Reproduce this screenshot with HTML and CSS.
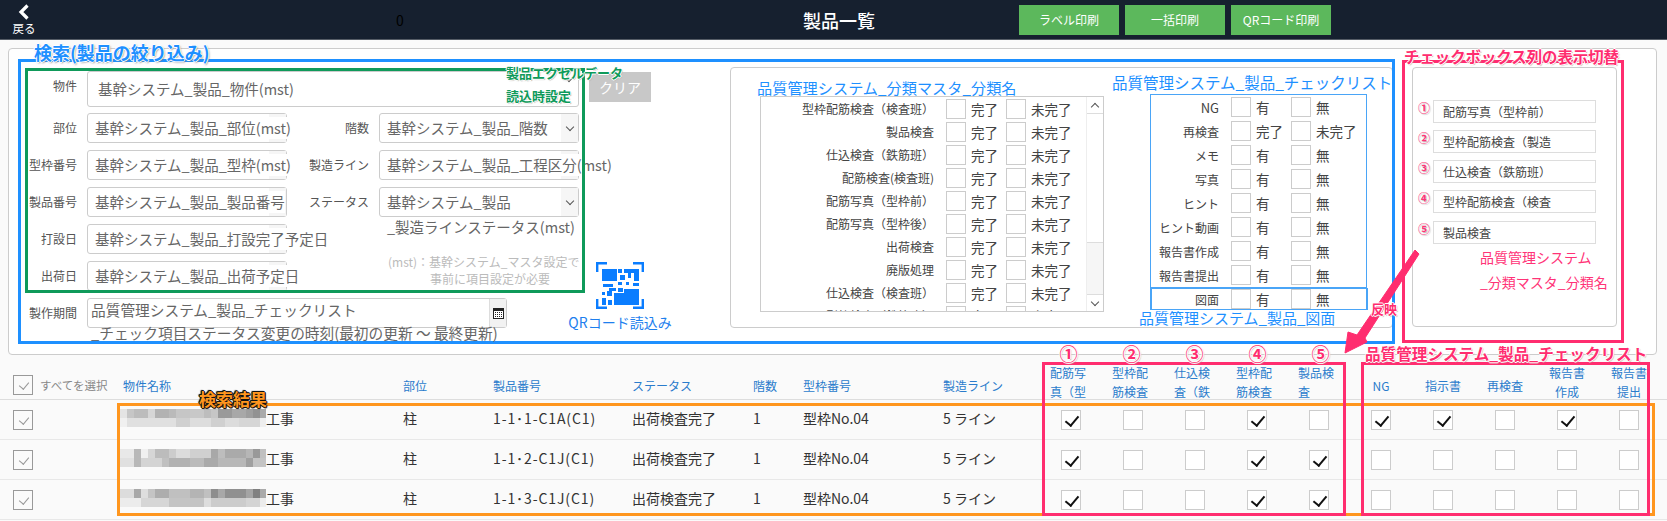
FILE: index.html
```html
<!DOCTYPE html>
<html lang="ja">
<head>
    <meta charset="UTF-8">
    <title>製品一覧</title>
    <link rel="stylesheet" href="styles.css">
</head>
<body>
<div class="page">
    <header class="topbar">
        <a class="back">
            <svg class="back-icon" width="12" height="16" viewBox="0 0 12 16"><polyline points="9.5,1.5 3,8 9.5,14.5" fill="none" stroke="#fff" stroke-width="3.2"/></svg>
            <span>戻る</span>
        </a>
        <div class="count">0</div>
        <div class="page-title">製品一覧</div>
        <div class="top-buttons">
            <button class="top-btn">ラベル印刷</button>
            <button class="top-btn">一括印刷</button>
            <button class="top-btn">QRコード印刷</button>
        </div>
    </header>

    <section class="search-panel">
        <!-- 検索フォーム -->
        <div class="search-form">
            <div class="label">物件</div>
            <div class="field field-wide">
                <span class="field-text field-text-wide">基幹システム_製品_物件(mst)</span>
                <i class="chev chev-field"></i>
            </div>
            <button class="clear-btn">クリア</button>

            <div class="label">部位</div>
            <div class="field"><i class="addon"></i><span class="field-text">基幹システム_製品_部位(mst)</span></div>
            <div class="label">階数</div>
            <div class="field"><i class="addon addon-select"><i class="chev"></i></i><span class="field-text">基幹システム_製品_階数</span></div>
            <div></div>

            <div class="label">型枠番号</div>
            <div class="field"><i class="addon"></i><span class="field-text">基幹システム_製品_型枠(mst)</span></div>
            <div class="label">製造ライン</div>
            <div class="field"><i class="addon"></i><span class="field-text">基幹システム_製品_工程区分(mst)</span></div>
            <div></div>

            <div class="label">製品番号</div>
            <div class="field"><i class="addon"></i><span class="field-text">基幹システム_製品_製品番号</span></div>
            <div class="label">ステータス</div>
            <div class="field field-status"><i class="addon addon-select"><i class="chev"></i></i><span class="field-text">基幹システム_製品<br>_製造ラインステータス(mst)</span></div>
            <div></div>

            <div class="label">打設日</div>
            <div class="field"><i class="addon"></i><span class="field-text">基幹システム_製品_打設完了予定日</span></div>
            <div></div>
            <div></div>
            <div></div>

            <div class="label">出荷日</div>
            <div class="field"><i class="addon"></i><span class="field-text">基幹システム_製品_出荷予定日</span></div>
            <div></div>
            <div class="note">
                <span class="note-line">(mst)：基幹システム_マスタ設定で</span>
                <span class="note-line note-line-2">事前に項目設定が必要</span>
            </div>
            <div class="qr-reader">
                <svg class="qr-icon" width="48" height="47" viewBox="0 0 48 47" fill="#0a7dff">
                    <path d="M1.2 10V1.2H11M37 1.2h9.8V10M1.2 37v8.8H11M37 45.800h9.800V37" fill="none" stroke="#0a7dff" stroke-width="2.400"/>
                    <rect x="6" y="7" width="15" height="12"/>
                    <rect x="22" y="7" width="4" height="4"/>
                    <rect x="28" y="7" width="15" height="4"/>
                    <rect x="24" y="13" width="5" height="5"/>
                    <rect x="32" y="11" width="3" height="5"/>
                    <rect x="38" y="11" width="5" height="8"/>
                    <rect x="22" y="20" width="4" height="3"/>
                    <rect x="30" y="20" width="3" height="3"/>
                    <rect x="37" y="21" width="6" height="3"/>
                    <rect x="7" y="22" width="10" height="3"/>
                    <rect x="13" y="26" width="7" height="3"/>
                    <rect x="6" y="30" width="3" height="3"/>
                    <rect x="11" y="29" width="5" height="5"/>
                    <rect x="22" y="26" width="5" height="4"/>
                    <rect x="28" y="27" width="15" height="16"/>
                    <rect x="18" y="31" width="10" height="12"/>
                    <rect x="6" y="36" width="4" height="7"/>
                    <rect x="12" y="38" width="4" height="5"/>
                </svg>
                <div class="qr-text">QRコード読込み</div>
            </div>

            <div class="label">製作期間</div>
            <div class="field field-period">
                <span class="period-text">品質管理システム_製品_チェックリスト<br>_チェック項目ステータス変更の時刻(最初の更新 〜 最終更新)</span>
                <i class="addon addon-calendar">
                    <svg width="11" height="11" viewBox="0 0 11 11"><rect width="11" height="11" fill="#222"/><path d="M1 3h9v7H1z" fill="#fff"/><path d="M2 4h1v1H2zM4 4h1v1H4zM6 4h1v1H6zM8 4h1v1H8zM2 6h1v1H2zM4 6h1v1H4zM6 6h1v1H6zM8 6h1v1H8zM2 8h1v1H2zM4 8h1v1H4zM6 8h1v1H6zM8 8h1v1H8z" fill="#222"/></svg>
                </i>
            </div>
        </div>

        <!-- 分類・チェックリスト -->
        <div class="category-box">
            <div class="category-left">
                <div class="blue-title category-title">品質管理システム_分類マスタ_分類名</div>
                <div class="category-list">
                    <div class="category-rows">
                        <div class="check-row"><span class="row-label">型枠配筋検査（検査班）</span><i class="box"></i><span class="opt">完了</span><i class="box"></i><span class="opt">未完了</span></div>
                        <div class="check-row"><span class="row-label">製品検査</span><i class="box"></i><span class="opt">完了</span><i class="box"></i><span class="opt">未完了</span></div>
                        <div class="check-row"><span class="row-label">仕込検査（鉄筋班）</span><i class="box"></i><span class="opt">完了</span><i class="box"></i><span class="opt">未完了</span></div>
                        <div class="check-row"><span class="row-label">配筋検査(検査班)</span><i class="box"></i><span class="opt">完了</span><i class="box"></i><span class="opt">未完了</span></div>
                        <div class="check-row"><span class="row-label">配筋写真（型枠前）</span><i class="box"></i><span class="opt">完了</span><i class="box"></i><span class="opt">未完了</span></div>
                        <div class="check-row"><span class="row-label">配筋写真（型枠後）</span><i class="box"></i><span class="opt">完了</span><i class="box"></i><span class="opt">未完了</span></div>
                        <div class="check-row"><span class="row-label">出荷検査</span><i class="box"></i><span class="opt">完了</span><i class="box"></i><span class="opt">未完了</span></div>
                        <div class="check-row"><span class="row-label">廃版処理</span><i class="box"></i><span class="opt">完了</span><i class="box"></i><span class="opt">未完了</span></div>
                        <div class="check-row"><span class="row-label">仕込検査（検査班）</span><i class="box"></i><span class="opt">完了</span><i class="box"></i><span class="opt">未完了</span></div>
                        <div class="check-row"><span class="row-label">型枠検査（鉄筋班）</span><i class="box"></i><span class="opt">完了</span><i class="box"></i><span class="opt">未完了</span></div>
                    </div>
                    <div class="scrollbar">
                        <div class="scroll-btn"><i class="chev chev-up"></i></div>
                        <div class="scroll-track"></div>
                        <div class="scroll-thumb"></div>
                        <div class="scroll-btn scroll-btn-down"><i class="chev"></i></div>
                    </div>
                </div>
            </div>
            <div class="category-right">
                <div class="blue-title checklist-title">品質管理システム_製品_チェックリスト</div>
                <div class="checklist">
                    <div class="check-row check-row-short"><span class="row-label row-label-latin">NG</span><i class="box"></i><span class="opt">有</span><i class="box"></i><span class="opt">無</span></div>
                    <div class="check-row check-row-short"><span class="row-label">再検査</span><i class="box"></i><span class="opt">完了</span><i class="box"></i><span class="opt">未完了</span></div>
                    <div class="check-row check-row-short"><span class="row-label">メモ</span><i class="box"></i><span class="opt">有</span><i class="box"></i><span class="opt">無</span></div>
                    <div class="check-row check-row-short"><span class="row-label">写真</span><i class="box"></i><span class="opt">有</span><i class="box"></i><span class="opt">無</span></div>
                    <div class="check-row check-row-short"><span class="row-label">ヒント</span><i class="box"></i><span class="opt">有</span><i class="box"></i><span class="opt">無</span></div>
                    <div class="check-row check-row-short"><span class="row-label">ヒント動画</span><i class="box"></i><span class="opt">有</span><i class="box"></i><span class="opt">無</span></div>
                    <div class="check-row check-row-short"><span class="row-label">報告書作成</span><i class="box"></i><span class="opt">有</span><i class="box"></i><span class="opt">無</span></div>
                    <div class="check-row check-row-short"><span class="row-label">報告書提出</span><i class="box"></i><span class="opt">有</span><i class="box"></i><span class="opt">無</span></div>
                </div>
                <div class="drawing-box">
                    <div class="check-row check-row-drawing"><span class="row-label">図面</span><i class="box"></i><span class="opt">有</span><i class="box"></i><span class="opt">無</span></div>
                </div>
                <div class="blue-title drawing-title">品質管理システム_製品_図面</div>
            </div>
        </div>

        <!-- 列の表示切替 -->
        <div class="toggle-box">
            <div class="toggle-row"><span class="toggle-num">①</span><div class="toggle-input">配筋写真（型枠前）</div></div>
            <div class="toggle-row"><span class="toggle-num">②</span><div class="toggle-input">型枠配筋検査（製造</div></div>
            <div class="toggle-row"><span class="toggle-num">③</span><div class="toggle-input">仕込検査（鉄筋班）</div></div>
            <div class="toggle-row"><span class="toggle-num">④</span><div class="toggle-input">型枠配筋検査（検査</div></div>
            <div class="toggle-row toggle-row-last"><span class="toggle-num">⑤</span><div class="toggle-input">製品検査</div></div>
            <div class="toggle-note">品質管理システム<br><span class="toggle-note-2">_分類マスタ_分類名</span></div>
        </div>
    </section>

    <section class="result">
        <div class="result-row result-head">
            <div class="select-all"><i class="box box-grey box-on"></i><span>すべてを選択</span></div>
            <div>物件名称</div>
            <div>部位</div>
            <div>製品番号</div>
            <div>ステータス</div>
            <div>階数</div>
            <div>型枠番号</div>
            <div>製造ライン</div>
            <div class="head-wrap">配筋写真（型</div>
            <div class="head-wrap">型枠配筋検査</div>
            <div class="head-wrap">仕込検査（鉄</div>
            <div class="head-wrap">型枠配筋検査</div>
            <div class="head-wrap">製品検査</div>
            <div class="head-center">NG</div>
            <div class="head-center">指示書</div>
            <div class="head-center">再検査</div>
            <div class="head-center head-two">報告書<br>作成</div>
            <div class="head-center head-two">報告書<br>提出</div>
        </div>

        <div class="result-row result-data">
            <div class="select-cell"><i class="box box-grey box-on"></i></div>
            <div class="name-cell"><i class="mosaic mosaic-1"></i>工事</div>
            <div>柱</div>
            <div class="no-cell">1-1･1-C1A(C1)</div>
            <div>出荷検査完了</div>
            <div>1</div>
            <div>型枠No.04</div>
            <div>5 ライン</div>
            <div class="check-cell"><i class="box box-on"></i></div>
            <div class="check-cell"><i class="box"></i></div>
            <div class="check-cell"><i class="box"></i></div>
            <div class="check-cell"><i class="box box-on"></i></div>
            <div class="check-cell"><i class="box"></i></div>
            <div class="check-cell"><i class="box box-on"></i></div>
            <div class="check-cell"><i class="box box-on"></i></div>
            <div class="check-cell"><i class="box"></i></div>
            <div class="check-cell"><i class="box box-on"></i></div>
            <div class="check-cell"><i class="box"></i></div>
        </div>
        <div class="result-row result-data">
            <div class="select-cell"><i class="box box-grey box-on"></i></div>
            <div class="name-cell"><i class="mosaic mosaic-2"></i>工事</div>
            <div>柱</div>
            <div class="no-cell">1-1･2-C1J(C1)</div>
            <div>出荷検査完了</div>
            <div>1</div>
            <div>型枠No.04</div>
            <div>5 ライン</div>
            <div class="check-cell"><i class="box box-on"></i></div>
            <div class="check-cell"><i class="box"></i></div>
            <div class="check-cell"><i class="box"></i></div>
            <div class="check-cell"><i class="box box-on"></i></div>
            <div class="check-cell"><i class="box box-on"></i></div>
            <div class="check-cell"><i class="box"></i></div>
            <div class="check-cell"><i class="box"></i></div>
            <div class="check-cell"><i class="box"></i></div>
            <div class="check-cell"><i class="box"></i></div>
            <div class="check-cell"><i class="box"></i></div>
        </div>
        <div class="result-row result-data">
            <div class="select-cell"><i class="box box-grey box-on"></i></div>
            <div class="name-cell"><i class="mosaic mosaic-3"></i>工事</div>
            <div>柱</div>
            <div class="no-cell">1-1･3-C1J(C1)</div>
            <div>出荷検査完了</div>
            <div>1</div>
            <div>型枠No.04</div>
            <div>5 ライン</div>
            <div class="check-cell"><i class="box box-on"></i></div>
            <div class="check-cell"><i class="box"></i></div>
            <div class="check-cell"><i class="box"></i></div>
            <div class="check-cell"><i class="box box-on"></i></div>
            <div class="check-cell"><i class="box box-on"></i></div>
            <div class="check-cell"><i class="box"></i></div>
            <div class="check-cell"><i class="box"></i></div>
            <div class="check-cell"><i class="box"></i></div>
            <div class="check-cell"><i class="box"></i></div>
            <div class="check-cell"><i class="box"></i></div>
        </div>
    </section>

    <!-- 説明用の注釈（画面の上に重ねる） -->
    <div class="mark mark-search"></div>
    <div class="mark mark-excel"></div>
    <div class="mark mark-toggle"></div>
    <div class="mark mark-result"></div>
    <div class="mark mark-cols"></div>
    <div class="mark mark-checks"></div>
    <svg class="arrow" width="90" height="120" viewBox="0 0 90 120"><polygon points="80,5 84,9 30,93 32,97 10,108 13,87 22,90" fill="#ff2d6f" stroke="#ff2d6f" stroke-linejoin="round"/></svg>

    <div class="tag tag-blue tag-search">検索(製品の絞り込み)</div>
    <div class="tag tag-green tag-excel-1">製品エクセルデータ</div>
    <div class="tag tag-green tag-excel-2">読込時設定</div>
    <div class="tag tag-pink tag-toggle">チェックボックス列の表示切替</div>
    <div class="tag tag-pink tag-reflect">反映</div>
    <div class="tag tag-pink tag-checks">品質管理システム_製品_チェックリスト</div>
    <div class="tag tag-result">検索結果</div>
    <div class="num-tags">
        <span class="tag-pink">①</span>
        <span class="tag-pink">②</span>
        <span class="tag-pink">③</span>
        <span class="tag-pink">④</span>
        <span class="tag-pink">⑤</span>
    </div>
</div>
</body>
</html>
```

FILE: styles.css
```css
*{
    margin: 0;
    padding: 0;
    box-sizing: border-box;
}

html, body{
    height: 521px;
    overflow: hidden;
}

body{
    background-color: #fafafa;
    color: #333;
    font-family: "Noto Sans CJK JP", "Noto Sans", sans-serif;
    font-size: 14px;
}

i{
    font-style: normal;
}

.page{
    position: relative;
    width: 1667px;
    height: 521px;
}

/* ヘッダー */
.topbar{
    display: flex;
    align-items: center;
    height: 40px;
    background-color: #16202f;
    border-bottom: 1px solid #555c66;
}

.back{
    display: flex;
    flex-direction: column;
    align-items: center;
    width: 48px;
    margin-right: 348px;
    color: #fff;
    font-size: 11.500px;
    line-height: 14px;
}

.back-icon{
    margin-bottom: 1px;
}

.count{
    width: 407px;
    color: #000;
    font-size: 14px;
}

.page-title{
    width: 216px;
    color: #fff;
    font-size: 18px;
    font-weight: 500;
}

.top-buttons{
    display: flex;
    gap: 6px;
}

.top-btn{
    width: 100px;
    height: 30px;
    background-color: #5cb85c;
    border: none;
    color: #fff;
    font-family: inherit;
    font-size: 12px;
}

/* 検索パネル */
.search-panel{
    display: flex;
    align-items: flex-start;
    height: 307px;
    margin: 8px 10px 0 8px;
    padding: 18px 0 0 16px;
    background-color: #fff;
    border: 1px solid #ccc;
    border-radius: 4px;
}

.search-form{
    display: grid;
    grid-template-columns: 52px 200px 72px 200px 62px;
    grid-template-rows: 35px repeat(6, 30px);
    gap: 7px 10px;
    width: 705px;
    padding-top: 4px;
}

.label{
    padding-top: 6px;
    color: #555;
    font-size: 12px;
    line-height: 17px;
    text-align: right;
    white-space: nowrap;
}

.field{
    position: relative;
    height: 30px;
    padding-left: 7px;
    background-color: #fff;
    border: 1px solid #ccc;
    border-radius: 3px;
    color: #666;
    font-size: 14.500px;
    white-space: nowrap;
}

.field-wide{
    grid-column: 2 / 5;
    height: 36px;
    padding-left: 10px;
}

.field-text{
    position: relative;
    display: inline-block;
    margin-top: 3px;
    background-color: #fff;
    line-height: 22px;
}

.field-text-wide{
    margin-top: 6px;
}

.field-status .field-text{
    margin-top: 1px;
    background: none;
    line-height: 25px;
}

.addon{
    position: absolute;
    top: 0;
    right: 0;
    bottom: 0;
    width: 17px;
    background-color: #f6f6f6;
}

.addon-select{
    display: flex;
    align-items: center;
    justify-content: center;
}

.chev{
    display: block;
    width: 6px;
    height: 6px;
    margin-top: -3px;
    border-right: 1.300px solid #555;
    border-bottom: 1.300px solid #555;
    transform: rotate(45deg);
}

.chev-up{
    margin-top: 3px;
    transform: rotate(225deg);
}

.chev-field{
    position: absolute;
    top: 6px;
    right: 6px;
}

.field-period{
    grid-column: 2 / 5;
    width: 420px;
    padding-left: 3px;
}

.period-text{
    position: relative;
    z-index: 1;
    display: block;
    margin-top: -1px;
    font-size: 14.700px;
    line-height: 23px;
}

.addon-calendar{
    display: flex;
    align-items: center;
    justify-content: center;
    width: 17px;
    background-color: #f2f2f2;
    border-left: 1px solid #ddd;
}

.clear-btn{
    width: 62px;
    height: 30px;
    margin-top: 1px;
    background-color: #c8c8c8;
    border: none;
    color: #fff;
    font-family: inherit;
    font-size: 14px;
}

.note{
    margin-top: -8px;
    margin-left: 9px;
    color: #bbb;
    font-size: 12px;
    line-height: 17px;
    white-space: nowrap;
}

.note-line{
    display: block;
}

.note-line-2{
    margin-left: 42px;
}

.qr-reader{
    grid-row: span 2;
    display: flex;
    flex-direction: column;
    align-items: center;
    padding-top: 1px;
}

.qr-icon{
    flex: none;
}

.qr-text{
    margin-top: 4px;
    color: #1e7fee;
    font-size: 14px;
    line-height: 18px;
    white-space: nowrap;
}

/* 分類・チェックリスト */
.category-box{
    display: flex;
    width: 663px;
    height: 261px;
    padding-left: 26px;
    background-color: #fff;
    border: 1px solid #ccc;
    border-radius: 4px;
}

.blue-title{
    color: #1e90ff;
    font-size: 15.500px;
    line-height: 18px;
    white-space: nowrap;
}

.category-title{
    height: 28px;
    padding-top: 10px;
    font-size: 15.200px;
}

.category-list{
    display: flex;
    width: 344px;
    height: 216px;
    margin-left: 3px;
    overflow: hidden;
    border: 1px solid #ccc;
}

.category-rows{
    width: 325px;
}

.check-row{
    display: grid;
    grid-template-columns: 185px 20px 40px 20px 1fr;
    align-items: center;
    height: 23px;
    white-space: nowrap;
}

.check-row-short{
    grid-template-columns: 80px 20px 40px 20px 1fr;
    height: 24px;
}

.check-row-drawing{
    grid-template-columns: 79px 20px 40px 20px 1fr;
    height: 18px;
}

.row-label{
    padding-right: 12px;
    color: #444;
    font-size: 12px;
    text-align: right;
}

.row-label-latin{
    font-size: 13px;
}

.opt{
    padding-left: 5px;
    color: #444;
    font-size: 13.500px;
}

.box{
    position: relative;
    display: block;
    width: 20px;
    height: 20px;
    background-color: #fff;
    border: 1px solid #ccc;
}

.box-on::after{
    content: "";
    position: absolute;
    left: 6px;
    top: 2px;
    width: 6px;
    height: 11px;
    border-right: 2px solid #111;
    border-bottom: 2px solid #111;
    transform: rotate(40deg);
}

.box-grey{
    background: none;
    border-color: #999;
}

.box-grey::after{
    left: 7px;
    top: 4px;
    width: 5px;
    height: 8px;
    border-right: 1px solid #999;
    border-bottom: 1px solid #999;
}

.scrollbar{
    display: flex;
    flex-direction: column;
    width: 17px;
    border-left: 1px solid #eee;
}

.scroll-btn{
    display: flex;
    align-items: center;
    justify-content: center;
    height: 17px;
    border-bottom: 1px solid #ddd;
}

.scroll-btn-down{
    border-top: 1px solid #ddd;
    border-bottom: none;
}

.scroll-track{
    height: 128px;
}

.scroll-thumb{
    height: 52px;
    background-color: #f6f6f6;
    border-top: 1px solid #ddd;
}

.category-right{
    margin-left: 8px;
}

.checklist-title{
    margin-top: 5px;
    margin-bottom: 3px;
}

.checklist{
    width: 217px;
    height: 194px;
    margin-left: 38px;
    background-color: #fff;
    border: 1px solid #4aa5f7;
}

.drawing-box{
    width: 218px;
    height: 22px;
    margin-left: 38px;
    overflow: hidden;
    border: 2px solid #4aa5f7;
    border-top-width: 1px;
    border-bottom-width: 1px;
}

.drawing-title{
    margin-left: 27px;
    font-size: 15px;
    line-height: 16px;
}

/* 列の表示切替 */
.toggle-box{
    display: flex;
    flex-direction: column;
    gap: 7px;
    width: 205px;
    height: 260px;
    margin-left: 19px;
    padding: 32px 0 0 5px;
    background-color: #fff;
    border: 1px solid #ccc;
    border-radius: 4px;
}

.toggle-row{
    display: flex;
}

.toggle-row-last{
    margin-top: 1px;
}

.toggle-num{
    width: 15px;
    color: #ff3377;
    font-size: 12px;
    font-weight: 700;
    line-height: 16px;
    text-shadow: 1px 1px 1px #bbb;
}

.toggle-input{
    width: 163px;
    height: 23px;
    padding-left: 9px;
    background-color: #fff;
    border: 1px solid #ddd;
    color: #444;
    font-size: 12px;
    line-height: 21px;
    white-space: nowrap;
}

.toggle-note{
    margin: -6px 0 0 62px;
    color: #ff3377;
    font-size: 14px;
    line-height: 25px;
    white-space: nowrap;
}

/* 検索結果 */
.result-row{
    display: grid;
    grid-template-columns: 110px 280px 90px 139px 121px 50px 140px 97px repeat(10, 62px);
    grid-template-rows: 39px;
    align-items: center;
    height: 40px;
    padding-left: 13px;
    border-bottom: 1px solid #e8e8e8;
    font-size: 14px;
    white-space: nowrap;
}

.result-data > div{
    margin-bottom: 3px;
}

.result-data > .check-cell,
.result-data > .select-cell{
    margin-bottom: 0;
}

.result-head{
    grid-template-rows: 28px;
    height: 45px;
    padding-top: 16px;
    border-bottom-color: #ddd;
    color: #2a7ccc;
    font-size: 12px;
}

.select-all{
    display: flex;
    align-items: center;
    gap: 7px;
    color: #888;
    font-size: 11.500px;
}

.head-wrap{
    width: 52px;
    height: 38px;
    margin-bottom: 7px;
    padding-left: 10px;
    overflow: hidden;
    line-height: 19px;
    white-space: normal;
}

.head-center{
    text-align: center;
}

.head-two{
    margin-bottom: 7px;
    line-height: 19px;
}

.no-cell{
    letter-spacing: 0.900px;
}

.name-cell{
    display: flex;
    align-items: center;
    margin-left: -3px;
}

.mosaic{
    display: block;
    width: 146px;
    height: 18px;
    background-repeat: no-repeat;
    background-size: 100% 9px;
    background-position: 0 0, 0 9px;
}

.mosaic-1{
    background-image:
        linear-gradient(90deg, #e4e4e4 0 7px, #c6c6c6 0 14px, #bcbcbc 0 28px, #d6d6d6 0 35px, #b2b2b2 0 49px, #bababa 0 56px, #c6c6c6 0 70px, #c8c8c8 0 84px, #bdbdbd 0 91px, #c6c6c6 0 98px, #9a9a9a 0 112px, #a8a8a8 0 126px, #9e9e9e 0 133px, #929292 0 140px, #aaa 0 146px),
        linear-gradient(90deg, #f0f0f0 0 7px, #e0e0e0 0 56px, #d0d0d0 0 70px, #ddd 0 91px, #d0d0d0 0 105px, #dcdcdc 0 119px, #d6d6d6 0 140px, #eee 0 146px);
}

.mosaic-2{
    background-image:
        linear-gradient(90deg, #e8e8e8 0 14px, #b8b8b8 0 21px, #f0f0f0 0 28px, #d6d6d6 0 35px, #bcbcbc 0 49px, #ccc 0 56px, #dcdcdc 0 70px, #d0d0d0 0 91px, #a8a8a8 0 98px, #bdbdbd 0 105px, #aaa 0 126px, #b6b6b6 0 133px, #999 0 140px, #c0c0c0 0 146px),
        linear-gradient(90deg, #e0e0e0 0 14px, #b8b8b8 0 21px, #d4d4d4 0 42px, #c0c0c0 0 49px, #b2b2b2 0 70px, #bbb 0 84px, #aaa 0 98px, #b8b8b8 0 126px, #a0a0a0 0 133px, #c4c4c4 0 146px);
}

.mosaic-3{
    background-image:
        linear-gradient(90deg, #dcdcdc 0 14px, #a8a8a8 0 21px, #dedede 0 28px, #c4c4c4 0 35px, #adadad 0 49px, #c0c0c0 0 70px, #b4b4b4 0 84px, #c0c0c0 0 91px, #8e8e8e 0 98px, #a8a8a8 0 105px, #909090 0 126px, #a4a4a4 0 133px, #808080 0 140px, #aaa 0 146px),
        linear-gradient(90deg, #ececec 0 21px, #d6d6d6 0 49px, #c4c4c4 0 84px, #ddd 0 91px, #ccc 0 126px, #d4d4d4 0 140px, #ececec 0 146px);
}

.check-cell{
    display: flex;
    justify-content: center;
}

/* 注釈の枠 */
.mark{
    position: absolute;
    border: 3px solid #ff2d6f;
}

.mark-search{
    left: 18px;
    top: 59px;
    width: 1377px;
    height: 285px;
    border-color: #1e90ff;
}

.mark-excel{
    left: 25px;
    top: 68px;
    width: 560px;
    height: 225px;
    border-color: #0f9a5a;
}

.mark-toggle{
    left: 1402px;
    top: 60px;
    width: 222px;
    height: 283px;
}

.mark-result{
    left: 117px;
    top: 403px;
    width: 1538px;
    height: 113px;
    border-color: #ff961e;
}

.mark-cols{
    left: 1042px;
    top: 362px;
    width: 304px;
    height: 154px;
}

.mark-checks{
    left: 1361px;
    top: 362px;
    width: 289px;
    height: 154px;
}

.arrow{
    position: absolute;
    left: 1335px;
    top: 245px;
}

/* 注釈の文字 */
.tag{
    position: absolute;
    font-weight: 700;
    white-space: nowrap;
}

.tag-blue{
    color: #1e90ff;
    text-shadow: -1px 0 #fff, 1px 0 #fff, 0 -1px #fff, 0 1px #fff, 1px 1px 2px #777;
}

.tag-green{
    color: #0f9a5a;
    text-shadow: -1px 0 #fff, 1px 0 #fff, 0 -1px #fff, 0 1px #fff, 1px 1px 1px #aaa;
}

.tag-pink{
    color: #ff2d6f;
    text-shadow: -1px 0 #fff, 1px 0 #fff, 0 -1px #fff, 0 1px #fff, 1px 1px 1px #aaa;
}

.tag-search{
    left: 34px;
    top: 40px;
    font-size: 18px;
    line-height: 24px;
}

.tag-excel-1{
    left: 506px;
    top: 63px;
    font-size: 13px;
    line-height: 20px;
}

.tag-excel-2{
    left: 506px;
    top: 86px;
    font-size: 13px;
    line-height: 20px;
}

.tag-toggle{
    left: 1404px;
    top: 46px;
    font-size: 15.400px;
    line-height: 20px;
}

.tag-reflect{
    left: 1371px;
    top: 299px;
    font-size: 13px;
    line-height: 20px;
}

.tag-checks{
    left: 1365px;
    top: 343px;
    font-size: 15.600px;
    line-height: 20px;
}

.tag-result{
    left: 199px;
    top: 389px;
    color: #ff961e;
    font-size: 17px;
    line-height: 20px;
    text-shadow: -1px 0 #111, 1px 0 #111, 0 -1px #111, 0 1px #111, 1px 1px 1px #111, -1px -1px 1px #111;
}

.num-tags{
    position: absolute;
    left: 1037px;
    top: 341px;
    display: grid;
    grid-template-columns: repeat(5, 63px);
    justify-items: center;
    width: 315px;
    font-size: 18px;
    font-weight: 700;
    line-height: 24px;
}
```
